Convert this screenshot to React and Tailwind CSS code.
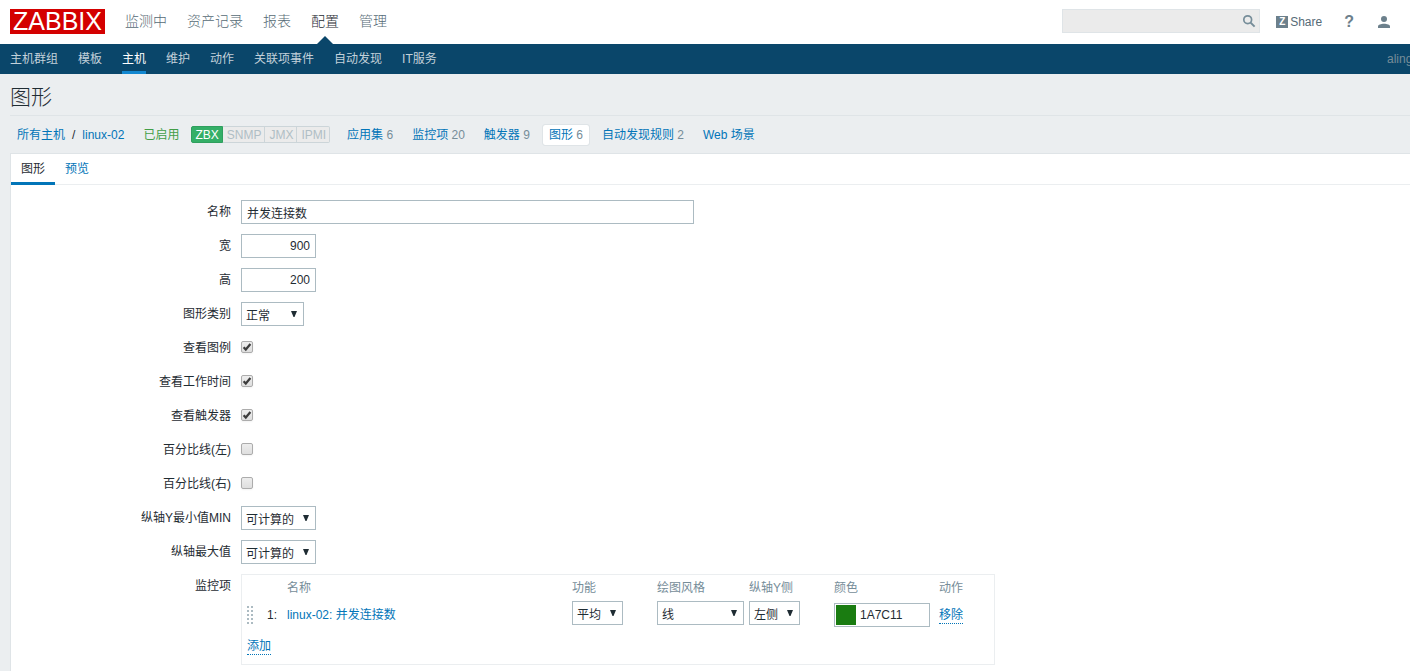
import React from 'react';

const MAIN_MENU = ['监测中', '资产记录', '报表', '配置', '管理'];
const SUB_MENU = ['主机群组', '模板', '主机', '维护', '动作', '关联项事件', '自动发现', 'IT服务'];

const HOST_LINKS = [
    { label: '应用集', count: 6 },
    { label: '监控项', count: 20 },
    { label: '触发器', count: 9 },
    { label: '图形', count: 6, selected: true },
    { label: '自动发现规则', count: 2 },
    { label: 'Web 场景' },
];

function SearchIcon() {
    return (
        <svg width="14" height="14" viewBox="0 0 14 14" fill="none" stroke="#768d99">
            <circle cx="5.7" cy="5.7" r="3.9" strokeWidth="1.7" />
            <path d="M8.6 8.6 L12.6 12.6" strokeWidth="2" />
        </svg>
    );
}

function UserIcon() {
    return (
        <svg width="12" height="12" viewBox="0 0 12 12" fill="#6c808c">
            <circle cx="6" cy="3" r="3" />
            <path d="M0 12 V10.4 C0 8.6 3 7.7 6 7.7 C9 7.7 12 8.6 12 10.4 V12 Z" />
        </svg>
    );
}

function Header() {
    return (
        <header>
            <div className="flex h-11 items-center bg-white pb-px pl-[10px] pr-5">
                <a href="#" className="flex h-[25px] w-[95px] items-center justify-center bg-[#d40000] text-[25px] leading-none text-white">
                    ZABBIX
                </a>
                <nav className="ml-5 flex flex-1 gap-5 self-stretch text-[14px] font-light">
                    {MAIN_MENU.map((item) => (
                        <a
                            key={item}
                            href="#"
                            className={item === '配置' ? 'relative flex items-center text-[#1f2c33]' : 'flex items-center text-[#566b76]'}
                        >
                            {item}
                            {item === '配置' && (
                                <span className="absolute -bottom-px left-1/2 -ml-2 border-x-8 border-b-8 border-x-transparent border-b-[#0a466a]" />
                            )}
                        </a>
                    ))}
                </nav>
                <form className="relative mb-px">
                    <input type="text" aria-label="Search" className="block h-6 w-[198px] border border-[#dfe4e7] bg-[#ebebeb] pl-1.5 pr-6 outline-none" />
                    <button type="button" aria-label="Search" className="absolute right-1 top-[5px]">
                        <SearchIcon />
                    </button>
                </form>
                <a href="#" className="ml-4 flex items-center gap-0.5 text-[#566b76]">
                    <span className="flex size-3 items-center justify-center bg-[#6c808c] text-[10px] font-bold leading-none text-white">Z</span>
                    Share
                </a>
                <a href="#" className="ml-[22px] text-[16px] font-bold text-[#6c808c]">?</a>
                <a href="#" aria-label="Profile" className="ml-6">
                    <UserIcon />
                </a>
            </div>
            <div className="flex h-[30px] justify-between bg-[#0a466a] pl-[10px] text-[#c3d1da]">
                <nav className="flex gap-5">
                    {SUB_MENU.map((item) => (
                        <a
                            key={item}
                            href="#"
                            className={
                                item === '主机'
                                    ? 'flex items-center border-b-[3px] border-[#1287d0] pt-[3px] text-white'
                                    : 'flex items-center'
                            }
                        >
                            {item}
                        </a>
                    ))}
                </nav>
                <span className="flex w-[23px] items-center overflow-hidden text-[#768d99]">aling</span>
            </div>
        </header>
    );
}

function HostBar() {
    return (
        <div className="flex h-[37px] items-center whitespace-nowrap text-[#0275b8]">
            <a href="#" className="ml-[7px]">所有主机</a>
            <span className="mx-[7px] text-[#1f2c33]">/</span>
            <a href="#">linux-02</a>
            <span className="ml-[19px] text-[#429e47]">已启用</span>
            <div className="ml-3 flex h-[17px] items-stretch leading-4 text-[#b0bec5]">
                <span className="rounded-l-xs border border-[#2f9f5e] bg-[#34af67] px-[3px] text-white">ZBX</span>
                <span className="border border-l-0 border-[#ccd5d9] bg-[#ebebeb] pl-1 pr-[3px]">SNMP</span>
                <span className="border border-l-0 border-[#ccd5d9] bg-[#ebebeb] pl-1 pr-[3px]">JMX</span>
                <span className="rounded-r-xs border border-l-0 border-[#ccd5d9] bg-[#ebebeb] pl-1 pr-[3px]">IPMI</span>
            </div>
            <nav className="ml-[11px] flex gap-[7px]">
                {HOST_LINKS.map(({ label, count, selected }) => (
                    <a
                        key={label}
                        href="#"
                        className={
                            selected
                                ? 'rounded-xs bg-white px-1.5 leading-5 outline outline-[#dfe4e7]'
                                : 'px-1.5 leading-5'
                        }
                    >
                        {label}
                        {count && <span className="text-[#768d99]"> {count}</span>}
                    </a>
                ))}
            </nav>
        </div>
    );
}

function Row({ label, id, children }) {
    return (
        <div className="flex items-start gap-[10px]">
            <label htmlFor={id} className="w-[220px] shrink-0 text-right leading-6">
                {label}
            </label>
            {children}
        </div>
    );
}

function Select({ id, label, className, children }) {
    return (
        <div className={`relative ${className}`}>
            <select
                id={id}
                aria-label={label}
                className="block h-6 w-full appearance-none border border-[#acbbc2] bg-white pl-1 pt-1 outline-none"
            >
                {children}
            </select>
            <svg className="pointer-events-none absolute right-[7px] top-[9px]" width="6" height="6" viewBox="0 0 6 6">
                <path d="M0 0 H6 L3.5 6 H2.5 Z" fill="#1f2c33" />
            </svg>
        </div>
    );
}

function Checkbox({ id, checked }) {
    return (
        <div className="relative mt-[5px]">
            <input
                type="checkbox"
                id={id}
                defaultChecked={checked}
                className="peer block size-3 appearance-none rounded-xs border border-[#acacac] bg-linear-to-b from-[#ededed] to-[#dedede] shadow-xs"
            />
            <svg
                className="pointer-events-none absolute left-0 top-0 hidden peer-checked:block"
                width="12"
                height="12"
                viewBox="0 0 12 12"
            >
                <path d="M2.6 6.2 L4.8 8.5 L9.4 3" fill="none" stroke="#3c3c3c" strokeWidth="2.2" />
            </svg>
        </div>
    );
}

function DragHandle() {
    return (
        <svg width="6" height="18" viewBox="0 0 6 18" fill="#acbbc2">
            {[0, 4, 8, 12, 16].map((y) => (
                <React.Fragment key={y}>
                    <rect x="0" y={y} width="2" height="2" />
                    <rect x="4" y={y} width="2" height="2" />
                </React.Fragment>
            ))}
        </svg>
    );
}

function ItemsTable() {
    return (
        <div className="border border-[#ebeef0] px-[5px]">
            <table className="w-[742px] table-fixed border-collapse text-left">
                <colgroup>
                    <col className="w-5" />
                    <col className="w-5" />
                    <col className="w-[285px]" />
                    <col className="w-[85px]" />
                    <col className="w-[92px]" />
                    <col className="w-[85px]" />
                    <col className="w-[105px]" />
                    <col className="w-[50px]" />
                </colgroup>
                <thead>
                    <tr className="h-[26px] text-[#768d99]">
                        <th />
                        <th />
                        <th className="font-normal">名称</th>
                        <th className="font-normal">功能</th>
                        <th className="font-normal">绘图风格</th>
                        <th className="font-normal">纵轴Y侧</th>
                        <th className="font-normal">颜色</th>
                        <th className="font-normal">动作</th>
                    </tr>
                </thead>
                <tbody>
                    <tr className="h-[27px]">
                        <td><DragHandle /></td>
                        <td>1:</td>
                        <td><a href="#" className="text-[#0275b8]">linux-02: 并发连接数</a></td>
                        <td className="align-top">
                            <Select label="功能" className="w-[51px]"><option>平均</option></Select>
                        </td>
                        <td className="align-top">
                            <Select label="绘图风格" className="w-[87px]"><option>线</option></Select>
                        </td>
                        <td className="align-top">
                            <Select label="纵轴Y侧" className="w-[51px]"><option>左侧</option></Select>
                        </td>
                        <td className="pt-0.5 align-top">
                            <div className="flex h-6 w-24 items-center border border-[#acbbc2] pl-px">
                                <button type="button" aria-label="选择颜色" className="size-5 bg-[#1a7c11]" />
                                <input type="text" aria-label="颜色" defaultValue="1A7C11" className="w-[70px] pl-1 outline-none" />
                            </div>
                        </td>
                        <td>
                            <button type="button" className="border-b border-dotted border-[#0275b8] leading-4 text-[#0275b8]">移除</button>
                        </td>
                    </tr>
                    <tr className="h-9">
                        <td colSpan={8}>
                            <button type="button" className="border-b border-dotted border-[#0275b8] leading-4 text-[#0275b8]">添加</button>
                        </td>
                    </tr>
                </tbody>
            </table>
        </div>
    );
}

export default function App() {
    return (
        <div className="flex min-h-screen flex-col overflow-x-hidden bg-[#ebeef0] font-['Liberation_Sans','Noto_Sans_CJK_SC',sans-serif] text-[12px] text-[#1f2c33]">
            <Header />
            <main className="flex flex-1 flex-col pl-[10px]">
                <h1 className="h-[42px] border-b border-[#dfe4e7] text-[21px] font-light leading-[46px]">图形</h1>
                <HostBar />
                <div className="flex-1 border-l border-t border-[#dfe4e7] bg-white">
                    <div className="flex h-[31px] border-b border-[#ebeef0]">
                        <button type="button" className="h-[31px] border-b-[3px] border-[#0275b8] px-[10px] pt-0.5">图形</button>
                        <button type="button" className="h-[31px] border-b-[3px] border-transparent px-[10px] pt-0.5 text-[#0275b8]">预览</button>
                    </div>
                    <form className="flex flex-col gap-[10px] pb-1.5 pt-[15px]">
                        <Row label="名称" id="name">
                            <input id="name" type="text" defaultValue="并发连接数" className="h-6 w-[453px] border border-[#acbbc2] px-[5px] outline-none" />
                        </Row>
                        <Row label="宽" id="width">
                            <input id="width" type="text" defaultValue="900" className="h-6 w-[75px] border border-[#acbbc2] px-[5px] text-right outline-none" />
                        </Row>
                        <Row label="高" id="height">
                            <input id="height" type="text" defaultValue="200" className="h-6 w-[75px] border border-[#acbbc2] px-[5px] text-right outline-none" />
                        </Row>
                        <Row label="图形类别" id="graphtype">
                            <Select id="graphtype" className="w-[63px]"><option>正常</option></Select>
                        </Row>
                        <Row label="查看图例" id="legend">
                            <Checkbox id="legend" checked />
                        </Row>
                        <Row label="查看工作时间" id="worktime">
                            <Checkbox id="worktime" checked />
                        </Row>
                        <Row label="查看触发器" id="triggers">
                            <Checkbox id="triggers" checked />
                        </Row>
                        <Row label="百分比线(左)" id="percentleft">
                            <Checkbox id="percentleft" />
                        </Row>
                        <Row label="百分比线(右)" id="percentright">
                            <Checkbox id="percentright" />
                        </Row>
                        <Row label="纵轴Y最小值MIN" id="ymin">
                            <Select id="ymin" className="w-[75px]"><option>可计算的</option></Select>
                        </Row>
                        <Row label="纵轴最大值" id="ymax">
                            <Select id="ymax" className="w-[75px]"><option>可计算的</option></Select>
                        </Row>
                        <Row label="监控项">
                            <ItemsTable />
                        </Row>
                    </form>
                </div>
            </main>
        </div>
    );
}
